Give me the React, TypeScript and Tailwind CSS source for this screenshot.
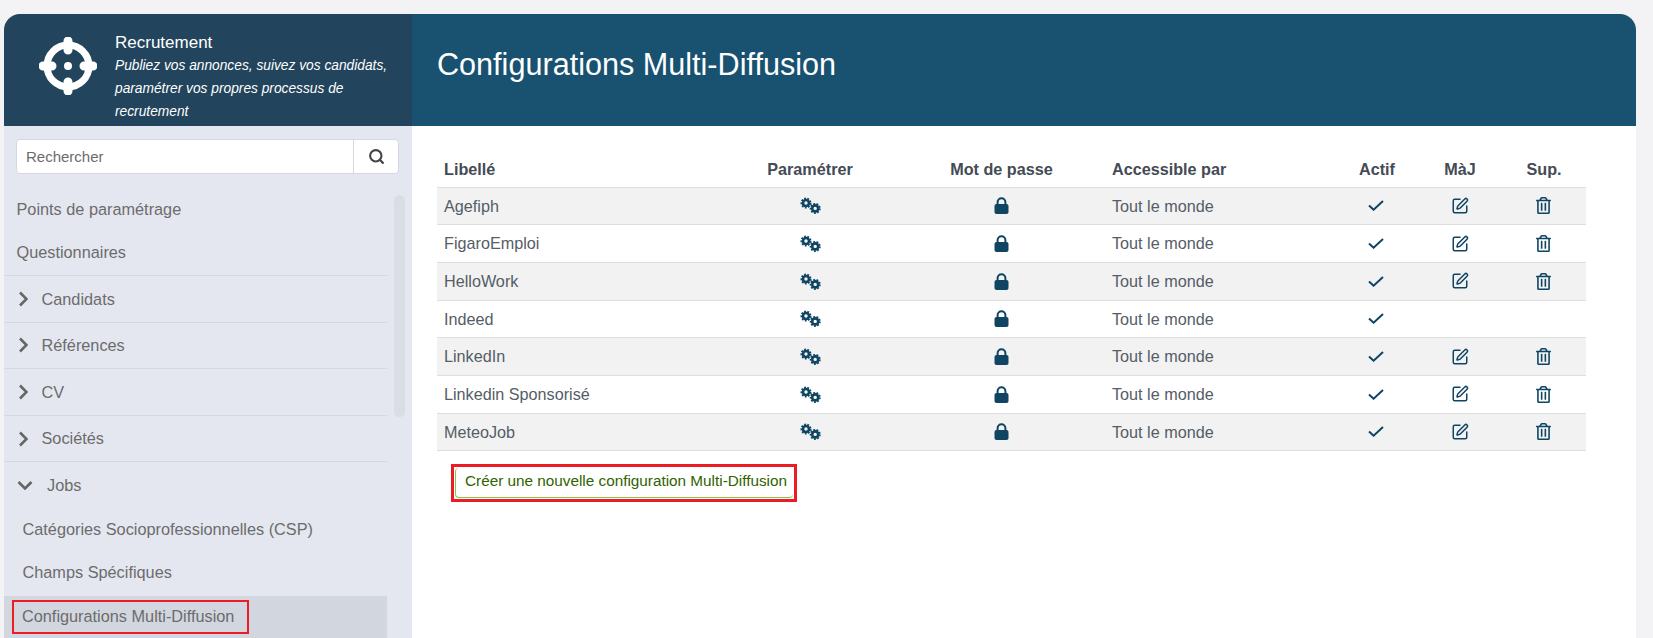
import { FaRegTrashAlt } from 'react-icons/fa';
import { Search, SquarePen } from 'lucide-react';

const rows = [
  { name: 'Agefiph', edit: true },
  { name: 'FigaroEmploi', edit: true },
  { name: 'HelloWork', edit: true },
  { name: 'Indeed', edit: false },
  { name: 'LinkedIn', edit: true },
  { name: 'Linkedin Sponsorisé', edit: true },
  { name: 'MeteoJob', edit: true },
];

const groups = ['Candidats', 'Références', 'CV', 'Sociétés'];

function TargetIcon() {
  return (
    <svg viewBox="0 0 58 58" className="h-[58px] w-[58px]" fill="none" stroke="white" strokeLinecap="round">
      <circle cx="29" cy="29" r="21" strokeWidth="7" />
      <path d="M29 4v9M29 45v9M4 29h9M45 29h9" strokeWidth="9" />
      <circle cx="29" cy="29" r="4" fill="white" stroke="none" />
    </svg>
  );
}

function Gear({ cx, cy }: { cx: number; cy: number }) {
  return (
    <g fill="none" stroke="currentColor">
      <circle cx={cx} cy={cy} r="3" strokeWidth="2.6" />
      <circle cx={cx} cy={cy} r="4.6" strokeWidth="1.8" strokeDasharray="1.8 1.41" />
    </g>
  );
}

function GearsIcon() {
  return (
    <svg viewBox="0 0 21 17" className="mx-auto h-[17px] w-[21px] text-[#0f4563]">
      <Gear cx={6} cy={6} />
      <Gear cx={15.2} cy={11.4} />
    </svg>
  );
}

function LockIcon() {
  return (
    <svg viewBox="0 0 15 17" className="mx-auto h-[17px] w-[15px] text-[#0f4563]">
      <path d="M3.6 8V5.2a3.9 3.9 0 0 1 7.8 0V8" fill="none" stroke="currentColor" strokeWidth="2" />
      <rect x="0.5" y="7" width="14" height="10" rx="2" fill="currentColor" />
    </svg>
  );
}

function CheckIcon() {
  return (
    <svg viewBox="0 0 16 11" className="mx-auto h-[11px] w-[16px] text-[#0f4563]" fill="none" stroke="currentColor" strokeWidth="2">
      <path d="M1 5.5l4.6 4.2L15 1" />
    </svg>
  );
}

function ChevronRight() {
  return (
    <svg viewBox="0 0 10 16" className="h-[16px] w-[10px] text-[#666]" fill="none" stroke="currentColor" strokeWidth="2.6">
      <path d="M2 1.5l6.5 6.5L2 14.5" />
    </svg>
  );
}

function ChevronDown() {
  return (
    <svg viewBox="0 0 16 10" className="h-[10px] w-[16px] text-[#666]" fill="none" stroke="currentColor" strokeWidth="2.6">
      <path d="M1.5 2L8 8.5 14.5 2" />
    </svg>
  );
}

export default function App() {
  return (
    <div className="h-[638px] overflow-hidden bg-[#f3f3f6] pt-[14px] pr-[17px] pl-1 font-['Liberation_Sans',Arial,sans-serif]">
      <div className="flex h-[624px] overflow-hidden rounded-t-2xl bg-white">
        {/* Sidebar */}
        <div className="w-[408px] shrink-0 bg-[#e4e7f0]">
          <div className="flex h-[112px] overflow-hidden bg-[#22445c] text-white">
            <div className="flex w-[111px] shrink-0 justify-center pt-[23px] pl-[16px]">
              <TargetIcon />
            </div>
            <div className="pt-[18px]">
              <div className="text-[17px] leading-[22px]">Recrutement</div>
              <div className="w-[285px] text-[13.75px] leading-[23px] italic">
                Publiez vos annonces, suivez vos candidats, paramétrer vos propres processus de recrutement
              </div>
            </div>
          </div>

          <div className="px-3 pt-[13px]">
            <div className="flex h-[35px] w-[383px] overflow-hidden rounded border border-[#d5d8e2] bg-white text-[#6c6c6c]">
              <div className="flex-1 pl-[9px] text-[15px] leading-[33px]">Rechercher</div>
              <div className="flex w-[45px] items-center justify-center border-l border-[#d5d8e2] text-[#444]">
                <Search size={17} strokeWidth={3} />
              </div>
            </div>
          </div>

          <div className="flex">
            <div className="w-[383px] pt-[14px] text-[16.3px] text-[#6c6c6c]">
              <div className="flex h-[43px] items-center pl-[12.5px]">Points de paramétrage</div>
              <div className="flex h-[45px] items-center border-b border-[#d5d8e2] pb-[2px] pl-[12.5px]">Questionnaires</div>
              {groups.map((g) => (
                <div key={g} className="flex h-[46.6px] items-center border-b border-[#d5d8e2] pl-[14px]">
                  <ChevronRight />
                  <span className="ml-[13.5px]">{g}</span>
                </div>
              ))}
              <div className="flex h-[45px] items-center pl-[13px]">
                <ChevronDown />
                <span className="ml-[14px]">Jobs</span>
              </div>
              <div className="flex h-[43px] items-center pl-[18.5px]">Catégories Socioprofessionnelles (CSP)</div>
              <div className="flex h-[46px] items-center pb-[2px] pl-[18.5px]">Champs Spécifiques</div>
              <div className="flex h-[43px] items-start bg-[#d2d6df] pt-[4px] pl-2">
                <span className="h-[34px] border-2 border-[#ed1c24] pr-[13px] pl-2 leading-[29px]">Configurations Multi-Diffusion</span>
              </div>
            </div>
            <div className="mt-[21px] ml-[7px] h-[222px] w-[11px] rounded-md bg-[#d8dee3]" />
          </div>
        </div>

        {/* Main */}
        <div className="flex-1">
          <div className="flex h-[112px] items-center bg-[#185270] pb-[11px] pl-[25px] text-[30.6px] text-white">
            Configurations Multi-Diffusion
          </div>
          <div className="pt-[27px] pl-[25px]">
            <table className="w-[1149px] table-fixed border-collapse text-[16.2px] text-[#555d66]">
              <colgroup>
                <col className="w-[283px]" />
                <col className="w-[180px]" />
                <col className="w-[203px]" />
                <col className="w-[233px]" />
                <col className="w-[82px]" />
                <col className="w-[84px]" />
                <col className="w-[84px]" />
              </colgroup>
              <thead>
                <tr className="h-[34px] text-[#444b54]">
                  <th className="pb-[2px] pl-[7px] text-left font-bold">Libellé</th>
                  <th className="pb-[2px] font-bold">Paramétrer</th>
                  <th className="pb-[2px] font-bold">Mot de passe</th>
                  <th className="pb-[2px] pl-[9px] text-left font-bold">Accessible par</th>
                  <th className="pb-[2px] font-bold">Actif</th>
                  <th className="pb-[2px] font-bold">MàJ</th>
                  <th className="pb-[2px] font-bold">Sup.</th>
                </tr>
              </thead>
              <tbody>
                {rows.map((r, i) => (
                  <tr key={r.name} className={`h-[37.7px] border-t border-b border-[#dedede] ${i % 2 === 0 ? 'bg-[#f2f2f2]' : 'bg-white'}`}>
                    <td className="pl-[7px]">{r.name}</td>
                    <td>
                      <GearsIcon />
                    </td>
                    <td>
                      <LockIcon />
                    </td>
                    <td className="pl-[9px]">Tout le monde</td>
                    <td className="pr-[2px]">
                      <CheckIcon />
                    </td>
                    <td>{r.edit && <SquarePen size={18} strokeWidth={2} className="mx-auto text-[#0f4563]" />}</td>
                    <td className="pr-[2px]">{r.edit && <FaRegTrashAlt className="mx-auto h-[17px] w-[15px] text-[#0f4563]" />}</td>
                  </tr>
                ))}
              </tbody>
            </table>
            <div className="mt-[13px] ml-[14px] inline-block border-[3px] border-[#ed1c24] p-[1px]">
              <div className="rounded-sm border-b border-l border-[#8bc34a] pt-[2px] pr-[6px] pb-[5px] pl-[9px] text-[15.3px] leading-[22px] text-[#2f6300]">
                Créer une nouvelle configuration Multi-Diffusion
              </div>
            </div>
          </div>
        </div>
      </div>
    </div>
  );
}
